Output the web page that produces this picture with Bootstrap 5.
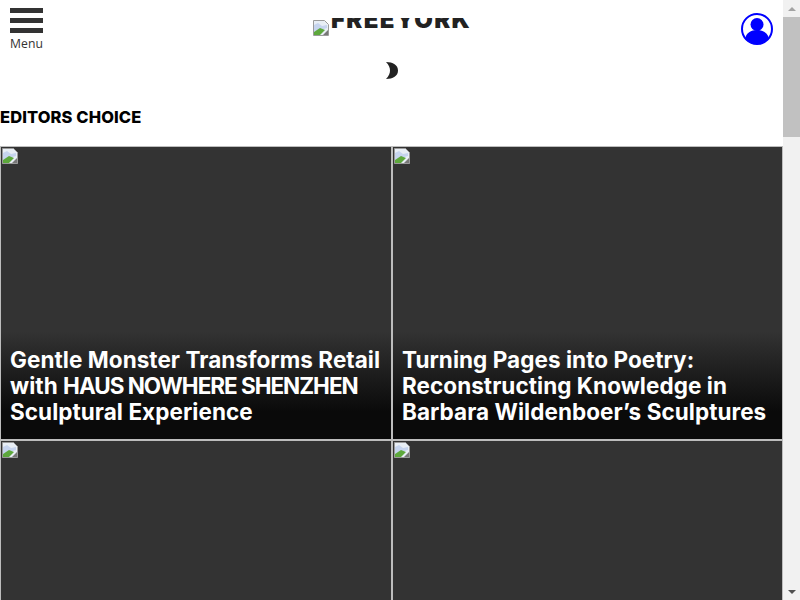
<!DOCTYPE html>
<html lang="en">
<head>
<meta charset="utf-8">
<title>Freeyork</title>
<link href="https://cdn.jsdelivr.net/npm/bootstrap@5.3.0/dist/css/bootstrap.min.css" rel="stylesheet">
<style>
html,body{height:100%;overflow:hidden;margin:0}
body{font-family:"Inter","Liberation Sans",sans-serif;background:#fff}
.shell{height:600px}
.pagearea{width:783px;overflow:hidden}
.fakebar{width:17px;background:#f1f1f1}
.fakebtn{height:17px}
.fakethumb{height:120px;background:#c1c1c1}
.arrow-up{width:0;height:0;border-left:4px solid transparent;border-right:4px solid transparent;border-bottom:4px solid #a3a3a3}
.arrow-down{width:0;height:0;border-left:4px solid transparent;border-right:4px solid transparent;border-top:4px solid #505050}
.topbar{height:60px;padding:8px 10px 0}
.burger{width:33px;color:#333}
.burger-line{height:5px;background:#333;margin-bottom:5px}
.burger-label{font-size:12.2px;line-height:14px;margin-top:-1px;color:#333;font-family:"Open Sans",sans-serif}
.brand{padding-left:270px;padding-top:10px}
.brand-clip{height:12px;overflow:hidden;color:#222;font-size:24px;font-weight:900;line-height:12px;margin:0 0 0 2px;width:142px}
.brand-text{display:block;margin-top:-8px;line-height:20px;letter-spacing:1.3px}
.themebar{height:22px}
.moon{margin-top:2px}
.sect{font-size:16.5px;font-weight:800;color:#000;line-height:24px;margin:23px 0 17px;letter-spacing:.1px}
.tile{height:294px;background:#333;border:1px solid #bdbdbd}
.tile-shade{background:linear-gradient(to bottom,rgba(0,0,0,0),#0a0a0a 75%);padding:16px 9px 14px}
.tile-title{color:#fff;font-size:22.5px;font-weight:700;line-height:26px;margin:0;letter-spacing:.05px}
.capsrun{letter-spacing:-1.03px}
.tilegrid{display:grid;grid-template-columns:392px 391px}
.broken{display:block}
.tile .broken{margin:1px}
.brand .broken{margin-top:2px}
.avatar{margin:4px -1px 0 0}
</style>
</head>
<body>
<div class="shell d-flex">
  <div class="pagearea">
    <div class="topbar d-flex position-relative">
      <div class="burger flex-shrink-0 text-center">
        <div class="burger-line"></div>
        <div class="burger-line"></div>
        <div class="burger-line"></div>
        <div class="burger-label">Menu</div>
      </div>
      <div class="brand d-flex align-items-start flex-grow-1">
        <svg class="broken flex-shrink-0" width="16" height="16" viewBox="0 0 16 16"><path d="M.5.5h11l4 4v11H.5z" fill="#e8eef5" stroke="#9a9a9a"/><path d="M1 5l4-2 4 3 5-1v3L1 12z" fill="#c6d4ee"/><path d="M1 15v-3l6-4 5 2-5 5z" fill="#5da83c"/><path d="M10 15l5-5v5z" fill="#777"/></svg>
        <div class="brand-clip"><span class="brand-text">FREEYORK</span></div>
      </div>
      <svg class="avatar flex-shrink-0" width="34" height="34" viewBox="0 0 34 34"><circle cx="17" cy="17" r="15" fill="#fff" stroke="#00f" stroke-width="2"/><circle cx="17" cy="12.5" r="6.5" fill="#00f"/><path d="M5 27c1-6 6-9 12-9s11 3 12 9c-3 3-7 5-12 5s-9-2-12-5z" fill="#00f"/></svg>
    </div>
    <div class="themebar d-flex justify-content-center">
      <svg class="moon" width="14" height="17" viewBox="0 0 14 17"><path d="M1 0C8 0 13 3 13 8.5S8 17 1 17C4 14 5 11 5 8.5S4 3 1 0z" fill="#222"/></svg>
    </div>
    <h2 class="sect">EDITORS CHOICE</h2>
    <div class="tilegrid">
      <article class="tile d-flex flex-column justify-content-between">
        <svg class="broken" width="16" height="16" viewBox="0 0 16 16"><path d="M.5.5h11l4 4v11H.5z" fill="#e8eef5" stroke="#9a9a9a"/><path d="M1 5l4-2 4 3 5-1v3L1 12z" fill="#c6d4ee"/><path d="M1 15v-3l6-4 5 2-5 5z" fill="#5da83c"/><path d="M10 15l5-5v5z" fill="#777"/></svg>
        <div class="tile-shade"><h3 class="tile-title">Gentle Monster Transforms Retail with <span class="capsrun">HAUS NOWHERE SHENZHEN</span> Sculptural Experience</h3></div>
      </article>
      <article class="tile d-flex flex-column justify-content-between">
        <svg class="broken" width="16" height="16" viewBox="0 0 16 16"><path d="M.5.5h11l4 4v11H.5z" fill="#e8eef5" stroke="#9a9a9a"/><path d="M1 5l4-2 4 3 5-1v3L1 12z" fill="#c6d4ee"/><path d="M1 15v-3l6-4 5 2-5 5z" fill="#5da83c"/><path d="M10 15l5-5v5z" fill="#777"/></svg>
        <div class="tile-shade"><h3 class="tile-title">Turning Pages into Poetry: Reconstructing Knowledge in Barbara Wildenboer’s Sculptures</h3></div>
      </article>
      <article class="tile">
        <svg class="broken" width="16" height="16" viewBox="0 0 16 16"><path d="M.5.5h11l4 4v11H.5z" fill="#e8eef5" stroke="#9a9a9a"/><path d="M1 5l4-2 4 3 5-1v3L1 12z" fill="#c6d4ee"/><path d="M1 15v-3l6-4 5 2-5 5z" fill="#5da83c"/><path d="M10 15l5-5v5z" fill="#777"/></svg>
      </article>
      <article class="tile">
        <svg class="broken" width="16" height="16" viewBox="0 0 16 16"><path d="M.5.5h11l4 4v11H.5z" fill="#e8eef5" stroke="#9a9a9a"/><path d="M1 5l4-2 4 3 5-1v3L1 12z" fill="#c6d4ee"/><path d="M1 15v-3l6-4 5 2-5 5z" fill="#5da83c"/><path d="M10 15l5-5v5z" fill="#777"/></svg>
      </article>
    </div>
  </div>
  <div class="fakebar d-flex flex-column flex-shrink-0">
    <div class="fakebtn d-flex align-items-center justify-content-center"><div class="arrow-up"></div></div>
    <div class="fakethumb"></div>
    <div class="flex-grow-1"></div>
    <div class="fakebtn d-flex align-items-center justify-content-center"><div class="arrow-down"></div></div>
  </div>
</div>
<script src="https://cdn.jsdelivr.net/npm/bootstrap@5.3.0/dist/js/bootstrap.bundle.min.js"></script>
</body>
</html>
